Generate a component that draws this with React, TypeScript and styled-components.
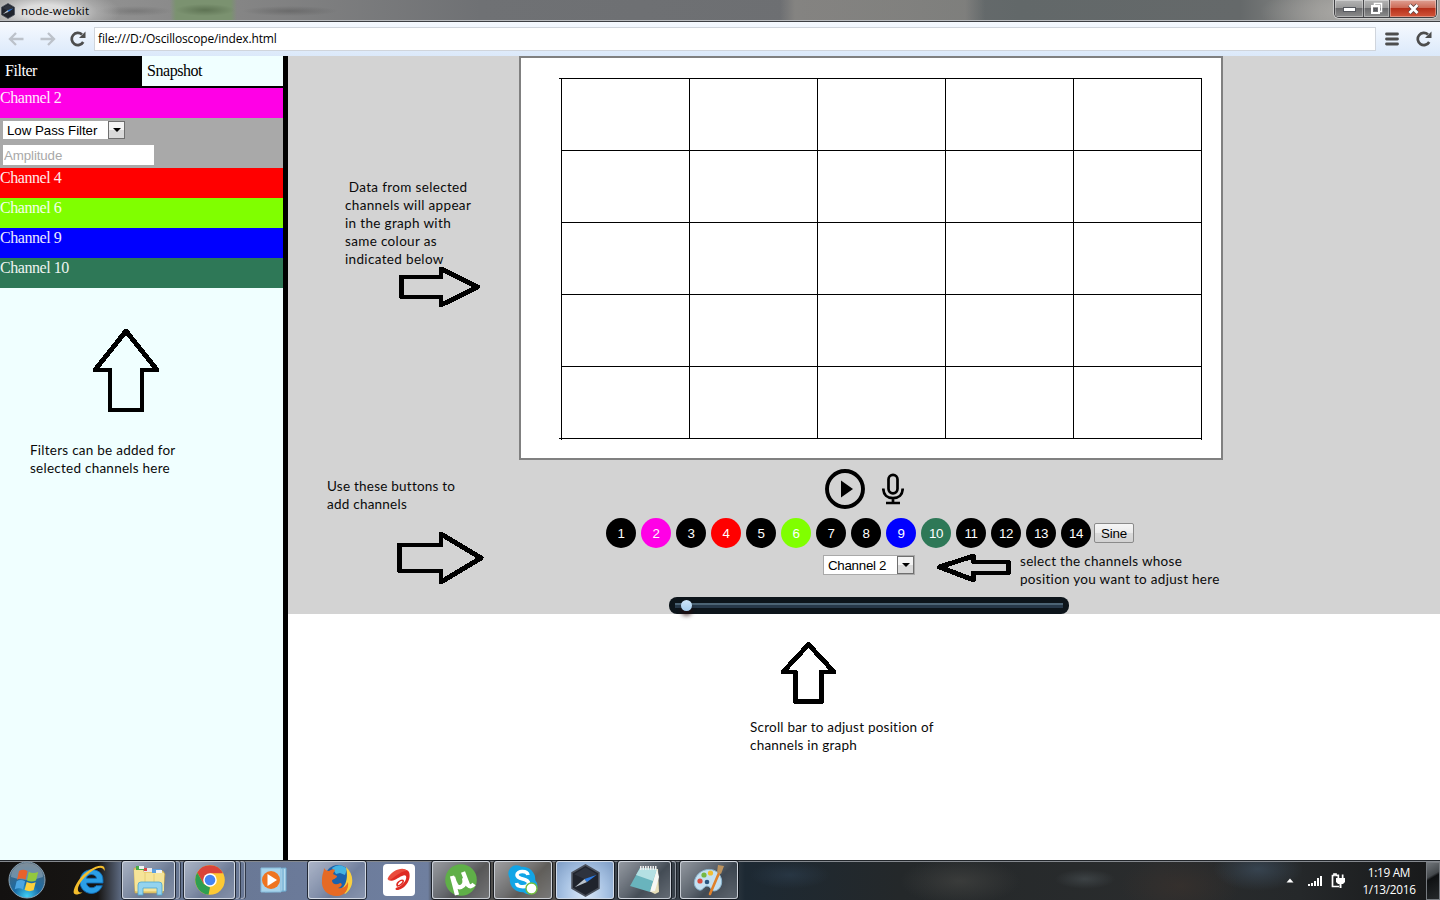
import React from "react";
import styled, { createGlobalStyle, css } from "styled-components";

const GlobalStyle = createGlobalStyle`
  *, *::before, *::after { box-sizing: border-box; }
  html, body { margin: 0; padding: 0; background: #fff; overflow: hidden; }
  svg { display: block; flex: none; }
`;

const ui = `"Open Sans", "Noto Sans", sans-serif`;
const arial = `"Liberation Sans", Arial, sans-serif`;

const Screen = styled.div`
  position: relative;
  width: 1440px;
  height: 900px;
  display: flex;
  flex-direction: column;
  overflow: hidden;
  background: #fff;
`;

/* ---------- window frame ---------- */

const TitleBar = styled.header`
  flex: none;
  height: 22px;
  display: flex;
  align-items: flex-start;
  padding-right: 3px;
  border-bottom: 1px solid #3e4044;
  box-shadow: inset 0 -1px 0 #b9bbbe;
  background:
    radial-gradient(ellipse 75px 24px at 45px 12px, rgba(225, 225, 225, 0.95) 30%, rgba(190, 190, 190, 0.5) 70%, transparent),
    radial-gradient(ellipse 30px 6px at 205px 10px, rgba(75, 95, 65, 0.6), transparent),
    radial-gradient(ellipse 48px 5px at 290px 11px, rgba(85, 85, 85, 0.5), transparent),
    radial-gradient(ellipse 38px 5px at 135px 11px, rgba(95, 95, 95, 0.45), transparent),
    linear-gradient(90deg, transparent 170px, #7b9270 176px, #7b9270 231px, transparent 237px),
    linear-gradient(90deg, transparent 780px, rgba(140, 138, 134, 0.75) 795px, rgba(140, 138, 134, 0.65) 965px, transparent 985px),
    radial-gradient(ellipse 120px 30px at 1380px 12px, #b4b2ae, transparent),
    linear-gradient(90deg, #999 0, #858585 240px, #6f7174 480px, #6d6f72 800px, #626869 1020px, #65696a 1240px, #8d8d8b 1320px, #9a9a98 100%);
`;

const AppIcon = styled.span`
  margin: 3px 0 0 0;
  width: 16px;
`;

const Title = styled.span`
  flex: 1;
  margin-left: 5px;
  font: 11.5px/22px ${ui};
  letter-spacing: 0.14px;
  color: #000;
`;

const WindowButtons = styled.div`
  display: flex;
  height: 18px;
  border: 1px solid #3f3f42;
  border-top: 0;
  border-radius: 0 0 5px 5px;
  overflow: hidden;
  box-shadow: 0 0 0 1px rgba(230, 230, 230, 0.6);
`;

const WindowButton = styled.span<{ $w: number; $close?: boolean }>`
  width: ${(p) => p.$w}px;
  display: flex;
  align-items: center;
  justify-content: center;
  box-shadow: inset 0 0 0 1px rgba(255, 255, 255, 0.35);
  background: ${(p) =>
    p.$close
      ? "linear-gradient(#dfa093 0, #cd6b57 45%, #b6301a 50%, #d2553a 100%)"
      : "linear-gradient(#b4b4b4 0, #9a9a9a 45%, #6b6b6d 50%, #8c8c8c 100%)"};
  & + & { border-left: 1px solid #4a4a4d; }
`;

const Toolbar = styled.nav`
  flex: none;
  height: 34px;
  display: flex;
  align-items: center;
  padding: 0 8px 0 7px;
  background: linear-gradient(#f6faff, #dbe9fa);
`;

const Address = styled.div`
  flex: 1;
  height: 24px;
  margin: 0 9px 0 8px;
  padding-left: 3px;
  border: 1px solid #d0d5dc;
  background: #fff;
  font: 12px/22px ${ui};
  letter-spacing: -0.14px;
  color: #000;
`;

const ToolIcon = styled.span<{ $ml?: number }>`
  display: flex;
  margin-left: ${(p) => p.$ml ?? 0}px;
`;

/* ---------- page ---------- */

const Page = styled.div`
  flex: 1;
  min-height: 0;
  display: flex;
`;

const Sidebar = styled.aside`
  flex: none;
  width: 288px;
  border-right: 5px solid #000;
  background: #f0ffff;
  font: 16px/20px "Liberation Serif", "Times New Roman", serif;
  letter-spacing: -0.45px;
`;

const Tabs = styled.div`
  display: flex;
  height: 32px;
  border-bottom: 2px solid #000;
`;

const Tab = styled.div<{ $active?: boolean }>`
  width: ${(p) => (p.$active ? 142 : 141)}px;
  padding-left: 5px;
  line-height: 30px;
  color: ${(p) => (p.$active ? "#fff" : "#000")};
  background: ${(p) => (p.$active ? "#000" : "#f0ffff")};
`;

const ChannelRow = styled.div<{ $color: string }>`
  height: 30px;
  color: #fff;
  background: ${(p) => p.$color};
`;

const RowLabel = styled.span`
  opacity: 0.92;
`;

const FilterPanel = styled.div`
  height: 50px;
  padding: 3px 0 0 3px;
  background: #a9a9a9;
`;

const SelectBox = styled.div<{ $w: number; $h: number; $border?: boolean }>`
  display: flex;
  justify-content: space-between;
  align-items: center;
  width: ${(p) => p.$w}px;
  height: ${(p) => p.$h}px;
  padding-left: 4px;
  background: #fff;
  color: #000;
  font: 13.333px/18px ${arial};
  letter-spacing: -0.05px;
  ${(p) =>
    p.$border &&
    css`
      border: 1px solid #a9a9a9;
      letter-spacing: -0.28px;
    `}
`;

const SelectText = styled.span`
  padding-top: 1px;
`;

const SelectArrow = styled.span`
  width: 17px;
  height: 18px;
  display: flex;
  align-items: center;
  justify-content: center;
  border: 1px solid #6f6f6f;
  background: linear-gradient(#f4f4f4 50%, #dadada 50%);
`;

const AmplitudeInput = styled.input`
  display: block;
  width: 151px;
  height: 20px;
  margin-top: 6px;
  padding: 1px;
  border: 0;
  background: #fff;
  font: 13.333px ${arial};
  letter-spacing: -0.12px;
  &::placeholder { color: #a9a9a9; opacity: 1; }
`;

const Scope = styled.main`
  flex: 1;
  height: 558px;
  display: flex;
  flex-direction: column;
  align-items: center;
  background: #d3d3d3;
`;

const GraphFrame = styled.div`
  flex: none;
  width: 704px;
  height: 404px;
  margin-left: 14px;
  border: 2px solid #808080;
  background: #fff;
`;

const Transport = styled.div`
  display: flex;
  align-items: center;
  gap: 17px;
  height: 40px;
  margin: 9px 0 0 0;
`;

const ChannelBar = styled.div`
  display: flex;
  align-items: center;
  gap: 5px;
  height: 30px;
  margin: 9px 0 0 12px;
`;

const ChannelButton = styled.button<{ $color: string }>`
  width: 30px;
  height: 30px;
  padding: 1px 0 0 0;
  border: 0;
  border-radius: 50%;
  background: ${(p) => p.$color};
  color: #fff;
  font: 13.333px/29px ${arial};
  letter-spacing: -0.4px;
`;

const SineButton = styled.button`
  width: 40px;
  height: 20px;
  margin-left: -2px;
  padding: 0;
  border: 1px solid #8a8a8a;
  border-radius: 2px;
  background: linear-gradient(#f6f6f6 0, #ebebeb 50%, #dcdcdc 50%, #d2d2d2 100%);
  font: 13.333px/17px ${arial};
  letter-spacing: -0.2px;
  color: #000;
`;

const PositionSelect = styled.div`
  margin: 7px 0 0 10px;
`;

const Slider = styled.div`
  width: 400px;
  height: 17px;
  margin: 22px 0 0 10px;
  padding: 6px 6px 0 6px;
  border-radius: 8px;
  background: #0d151b;
`;

const SliderTrack = styled.div`
  height: 5px;
  display: flex;
  align-items: center;
  padding-left: 6px;
  background: linear-gradient(#4c6475 0 2px, #27394a 2px);
`;

const SliderThumb = styled.span`
  flex: none;
  width: 11px;
  height: 11px;
  border-radius: 50%;
  background: linear-gradient(#cfe6fa, #a5cdee);
  box-shadow: 0 5px 4px rgba(40, 10, 10, 0.6);
`;

/* ---------- annotations drawn over the page ---------- */

const Note = styled.p<{ $x: number; $y: number; $ls?: number }>`
  position: absolute;
  left: ${(p) => p.$x}px;
  top: ${(p) => p.$y}px;
  margin: 0;
  white-space: pre;
  font: 13.5px/18px Lato, "Open Sans", sans-serif;
  letter-spacing: ${(p) => p.$ls ?? 0}px;
  color: #0a0a0a;
`;

const ArrowLayer = styled.svg`
  position: absolute;
  left: 0;
  top: 0;
  pointer-events: none;
`;

/* ---------- taskbar ---------- */

const Taskbar = styled.footer`
  flex: none;
  height: 40px;
  display: flex;
  border-top: 1px solid #22262b;
  box-shadow: inset 0 1px 0 #85898f;
  background:
    radial-gradient(ellipse 45px 22px at 1258px 8px, rgba(75, 100, 125, 0.45), transparent),
    radial-gradient(ellipse 60px 30px at 1180px 25px, rgba(60, 50, 45, 0.6), transparent),
    radial-gradient(ellipse 30px 10px at 1085px 18px, rgba(90, 100, 105, 0.4), transparent),
    radial-gradient(ellipse 60px 24px at 960px 20px, rgba(75, 75, 72, 0.55), transparent),
    radial-gradient(ellipse 40px 14px at 790px 14px, rgba(50, 70, 90, 0.45), transparent),
    linear-gradient(90deg, #131110 0, #171513 98px, #66758f 124px, #6b7a99 300px, #6f7f9f 428px, #45474a 434px, #5a564f 540px, #3c444c 620px, #343d46 730px, #1d2933 745px, #24282a 900px, #2a2c2d 1160px, #25282a 1300px, #171819 100%);
`;

const TaskItem = styled.div<{ $w: number; $ml?: number; $kind?: "framed" | "active" }>`
  flex: none;
  display: flex;
  align-items: center;
  justify-content: center;
  width: ${(p) => p.$w}px;
  height: 38px;
  margin-left: ${(p) => p.$ml ?? 0}px;
  ${(p) =>
    p.$kind &&
    css`
      border: 1px solid rgba(225, 230, 238, 0.8);
      border-radius: 3px;
      box-shadow: 0 0 0 1px rgba(10, 14, 20, 0.75);
      background: ${p.$kind === "active"
        ? "radial-gradient(ellipse at 50% 90%, #dceafa, #a6c1e2 55%, #7d9cc4)"
        : "linear-gradient(135deg, rgba(235,238,245,0.5) 0, rgba(200,206,220,0.25) 45%, rgba(150,156,170,0.12) 60%, rgba(200,205,215,0.3) 100%)"};
    `}
`;

const Stack = styled.div`
  flex: none;
  width: 4px;
  height: 38px;
  margin-left: 1px;
  border: 1px solid rgba(200, 206, 216, 0.6);
  border-left: 0;
  border-radius: 0 3px 3px 0;
  box-shadow: 1px 0 0 rgba(10, 14, 20, 0.6);
`;

const Tray = styled.div`
  margin-left: auto;
  display: flex;
  align-items: center;
`;

const Clock = styled.div`
  width: 74px;
  margin-left: 7px;
  text-align: center;
  color: #fff;
  font: 11.8px/17px ${ui};
  letter-spacing: -0.3px;
`;

const ShowDesktop = styled.div`
  width: 14px;
  height: 38px;
  border: 1px solid #777b80;
  background: linear-gradient(150deg, #70757a 0, #44484c 35%, #0e1012 42%, #26292b 100%);
`;

/* ---------- drawings ---------- */

const HexCompass = ({ size }: { size: number }) => (
  <svg width={size} height={size} viewBox="0 0 32 32">
    <path d="M16 1 29 8.500V23.500L16 31 3 23.500V8.500Z" fill="#20242d" stroke="#4b515c" strokeWidth="1.6" />
    <path d="M16 3.500 27 10 16 15 5 10Z" fill="#343a46" opacity=".7" />
    <path d="M5.500 22.500 15 14.500 17.500 17.500Z" fill="#b9c2cc" />
    <path d="M27 10.500 15 14.500 17.500 17.500Z" fill="#2f7be0" />
  </svg>
);

const NavArrow = ({ flip }: { flip?: boolean }) => (
  <svg width="18" height="16" viewBox="0 0 18 16" style={flip ? { transform: "scaleX(-1)" } : undefined}>
    <path d="M16.500 8H3.500M9 2 3 8l6 6" fill="none" stroke="#bcc2ca" strokeWidth="2.300" />
  </svg>
);

const Reload = () => (
  <svg width="16" height="16" viewBox="0 0 16 16">
    <path d="M13.200 11A6.100 6.100 0 1 1 12 3.500" fill="none" stroke="#4d4d4d" strokeWidth="2.700" />
    <path d="M15.500 0.500V7H9Z" fill="#4d4d4d" />
  </svg>
);

const DropTriangle = () => (
  <svg width="8" height="4" viewBox="0 0 8 4">
    <path d="M0 0h8L4 4Z" fill="#000" />
  </svg>
);

const Graph = () => (
  <svg width="700" height="400" viewBox="0 0 700 400" shapeRendering="crispEdges">
    {[0, 1, 2, 3, 4, 5].map((i) => (
      <g key={i} fill="#000">
        <rect x={40 + i * 128} y={20} width={1} height={i % 5 === 0 ? 362 : 361} />
        <rect x={i % 5 === 0 ? 38 : 40} y={20 + i * 72} width={i % 5 === 0 ? 643 : 641} height={1} />
      </g>
    ))}
  </svg>
);

const PlayIcon = () => (
  <svg width="40" height="40" viewBox="0 0 40 40">
    <circle cx="20" cy="20" r="18" fill="none" stroke="#000" strokeWidth="3.900" />
    <path d="M16 11.500 28 20 16 28.500Z" fill="#000" />
  </svg>
);

const MicIcon = () => (
  <svg width="22" height="32" viewBox="0 0 22 32">
    <g fill="none" stroke="#000" strokeWidth="2.700">
      <rect x="6.500" y="1.800" width="9" height="18.500" rx="4.500" />
      <path d="M1.300 15.500c0 6.500 4.200 9.600 9.700 9.600s9.700-3.100 9.700-9.600M11 25v5M4 30h14" />
    </g>
  </svg>
);

const StartOrb = () => (
  <svg width="38" height="38" viewBox="0 0 38 38">
    <defs>
      <radialGradient id="orb" cx=".5" cy=".95" r=".9">
        <stop offset="0" stopColor="#3fd0f5" />
        <stop offset=".4" stopColor="#1a6ca6" />
        <stop offset="1" stopColor="#4d6375" />
      </radialGradient>
    </defs>
    <circle cx="19" cy="19" r="18" fill="url(#orb)" stroke="#8ba3b5" />
    <path d="M3 16a16 14 0 0 1 32 0q-16 6-32 0Z" fill="#fff" opacity=".27" />
    <path d="M11 10q4-2.500 8.500 0l-2 8.700q-4-2.300-8.500 0Z" fill="#e8622c" />
    <path d="M20.800 10.800q4 2.300 9.400.2l-2.200 8.600q-4.500 2-9-.2Z" fill="#93c83e" />
    <path d="M8.600 20.300q4-2.400 8.500 0l-2.100 8.300q-3.500-2.300-8.300-.3Z" fill="#4ba5e2" />
    <path d="M18.700 21q4 2.200 9 .2l-2.100 8.100q-4.500 1.800-9-.3Z" fill="#fcd03c" />
  </svg>
);

const ExplorerE = () => (
  <svg width="34" height="34" viewBox="0 0 34 34">
    <path d="M30 20H13.500c.3 5 7 6.300 9.500 2.700h6.300C24.500 35 6.500 32 7 18 7.500 3 30 3 30 17ZM13.500 15.300h10c-.5-5-9.500-5-10 0Z" fill="#2b9fe6" stroke="#116bb4" strokeWidth=".9" />
    <path d="M31.500 8C34-3 14 5 5.500 17.500-2 29-1 35 9.500 29.500 1 30.500 5.500 20 13 13 20 6 29 1 31.500 8Z" fill="#f4bd2c" />
  </svg>
);

const FolderIcon = () => (
  <svg width="34" height="32" viewBox="0 0 34 32">
    <path d="M2 4h8l1 3h20l2 3-2 19H3Z" fill="#e9cf74" stroke="#c3a24c" strokeWidth=".7" />
    <path d="M4 2h8v4H4Z" fill="#48ad49" /><path d="M12 4h8v4h-8Z" fill="#e9e9e9" /><path d="M20 5h9v4h-9Z" fill="#5c9fe0" />
    <path d="M7 2h5v3H7Z" fill="#f3f3f3" /><path d="M12 4h3v3h-3Z" fill="#d44" /><path d="M24 6h6v3h-6Z" fill="#f3f3f3" />
    <path d="M2 6h9l1 3h20v18H3Z" fill="#f6e498" />
    <path d="M13 9v15M22 10v14" stroke="#e2c76d" strokeWidth=".8" />
    <path d="M6 31V21q0-3 3-3h18q3 0 3 3v10h-5v-7H11v7Z" fill="#93d3ee" stroke="#4ba4cf" strokeWidth=".8" />
  </svg>
);

const ChromeIcon = () => (
  <svg width="30" height="30" viewBox="0 0 30 30">
    <circle cx="15" cy="15" r="14.800" fill="#fcc934" />
    <path d="M2.200 7.600A14.800 14.800 0 0 1 28 8.200H15L8.600 18.700Z" fill="#d9443a" />
    <path d="M2.200 7.600 8.600 18.700 15 22.400 13.500 29.700A14.800 14.800 0 0 1 2.200 7.600Z" fill="#2f9e50" />
    <circle cx="15" cy="15" r="6.800" fill="#fff" />
    <circle cx="15" cy="15" r="5.300" fill="#4585f2" />
  </svg>
);

const MediaIcon = () => (
  <svg width="28" height="26" viewBox="0 0 28 26">
    <path d="M5 2 26 1v23L5 25Z" fill="#b9dcef" stroke="#6aaad0" />
    <path d="M23 2v22" stroke="#5a9fc9" />
    <path d="M1 1h20v24H1Z" fill="#a9d4eb" stroke="#86bcdc" />
    <circle cx="11" cy="13" r="9" fill="#ef7420" />
    <path d="M7.500 7 17 13 7.500 19Z" fill="#fff" />
  </svg>
);

const FirefoxIcon = () => (
  <svg width="32" height="32" viewBox="0 0 32 32">
    <circle cx="17" cy="14" r="13" fill="#1b62ad" />
    <path d="M11 4q8-6 15 1l-2 6-5-2-4 1Z" fill="#44b3e2" />
    <path d="M25 3c9 8 8 21-1 27l-4-5c6-4 7-13 5-22Z" fill="#f8cf40" />
    <path d="M3 4c1 2 3 3 5 3 3-2 5-2 6-1l-2 4 4 2c0 3-5 3-5 5 1 4 5 4 8 2 3 0 2 4-2 5 4 1 8-1 10-6 1 7-3 14-11 14C6 32 0 25 1 16 1 10 3 8 3 4Z" fill="#e66a24" />
  </svg>
);

const AirtelIcon = () => (
  <svg width="32" height="32" viewBox="0 0 32 32">
    <rect width="32" height="32" rx="4" fill="#fff" />
    <path d="M6 15C8 8 22 2 26 8c3 8-5 18-12 18-2 0-2-2 0-2.500 5-1 10.500-8 9-11.500-2-3-8 3-13 4.500-3 .5-4.500 0-4-1.500Z" fill="#df2b23" />
    <path d="M14.500 22c-2-3 3.500-6.500 5.500-5.500 1 1.500-2.500 5.500-5.500 5.500Z" fill="none" stroke="#df2b23" strokeWidth="1.600" />
    <path d="M4.500 15C8 6 21 2 24 7c-5-1-12 6-18 9.500Z" fill="#ea4b3c" />
  </svg>
);

const TorrentIcon = () => (
  <svg width="32" height="32" viewBox="0 0 32 32">
    <circle cx="16" cy="16" r="15.800" fill="#5faf48" />
    <path d="M7 12 12 31M8 13q3 12 8 10t3-9M18 8l5 13q3 3 6-1" fill="none" stroke="#fff" strokeWidth="4.300" />
  </svg>
);

const SkypeIcon = () => (
  <svg width="30" height="30" viewBox="0 0 30 30">
    <circle cx="14.500" cy="14.500" r="12.800" fill="#12a5e6" />
    <circle cx="8.500" cy="8.500" r="8.200" fill="#12a5e6" /><circle cx="21" cy="21" r="8.500" fill="#12a5e6" />
    <path d="M20 10c-1-5-11-4.500-11 0 0 5 11.500 3 11.500 8 0 5-11 5-12 0" fill="none" stroke="#fff" strokeWidth="3.600" />
    <circle cx="23.500" cy="23.500" r="5.500" fill="#fff" stroke="#72bd3d" strokeWidth="1.400" />
  </svg>
);

const NotepadIcon = () => (
  <svg width="32" height="30" viewBox="0 0 32 30">
    <path d="M12 3 29 4 30 27 26 29 22 27Z" fill="#e8dfb8" />
    <path d="M11 3 28 4 21 27 1 21Z" fill="#69b4bd" />
    <path d="M11 3 28 4 24 16 7 10Z" fill="#b4e0e3" />
    <path d="M28 4 21 27 26 26 30 12Z" fill="#f5f7f4" />
    <path d="M11 3h17" stroke="#eee" strokeWidth="4" strokeDasharray="1.500 1" />
  </svg>
);

const PaintIcon = () => (
  <svg width="32" height="32" viewBox="0 0 32 32">
    <path d="M3 13C8 4 21 3 26 10c6 8 1 17-5 17-4 0-3-5-7-5-3 0-4 5-8 4-5-2-6-8-3-13Z" fill="#c5e1f2" stroke="#8ab3cc" />
    <circle cx="7" cy="17" r="2.600" fill="#d94d3f" /><circle cx="11" cy="11" r="2.600" fill="#76b843" />
    <circle cx="17.500" cy="9" r="2.600" fill="#f0bd33" /><circle cx="14" cy="18" r="2.300" fill="#2a5580" />
    <path d="M26 9 17 30" stroke="#df812c" strokeWidth="2.600" strokeLinecap="round" />
    <path d="M24 8 25 1l6 1-3 8Z" fill="#bc935f" />
  </svg>
);

const SignalIcon = () => (
  <svg width="15" height="12" viewBox="0 0 15 12" fill="#fff" shapeRendering="crispEdges">
    <path d="M0 9h2v2H0ZM3 8h2v3H3ZM6 6h2v5H6ZM9 3h2v8H9ZM12 1h2v10h-2Z" />
  </svg>
);

const PowerIcon = () => (
  <svg width="14" height="16" viewBox="0 0 14 16">
    <path d="M7 2.500H5V1H3v1.500H1.500v11H8" fill="none" stroke="#fff" strokeWidth="1.700" />
    <path d="M5 5h9v4l-2 2h-1.500v4h-2v-4H7L5 9ZM6.500 1.500h1.700V5H6.500ZM10.800 1.500h1.700V5h-1.700Z" fill="#fff" />
  </svg>
);

const arrows = [
  "M401.500 277H441V269L477.500 287 441 305V297H401.500Z",
  "M126 331 157 370H142V410H110V370H95Z",
  "M399.500 545H441V534L481 558 441 582V571H399.500Z",
  "M939.500 567 973.500 556V562H1008.500V573H973.500V580Z",
  "M808.500 644.500 834 672H821.500V701.500H795.500V672H783Z",
];

const channelColors: Record<number, string> = {
  2: "#ff00e6",
  4: "#ff0000",
  6: "#80ff00",
  9: "#0000ff",
  10: "#2e7857",
};

const notes = [
  { x: 345, y: 178, ls: 0.34, text: " Data from selected\nchannels will appear\nin the graph with\nsame colour as\nindicated below" },
  { x: 30, y: 441, ls: 0.25, text: "Filters can be added for\nselected channels here" },
  { x: 327, y: 477, ls: 0.23, text: "Use these buttons to\nadd channels" },
  { x: 1020, y: 552, ls: 0.29, text: "select the channels whose\nposition you want to adjust here" },
  { x: 750, y: 718, ls: 0.22, text: "Scroll bar to adjust position of\nchannels in graph" },
];

export default function App() {
  return (
    <Screen>
      <GlobalStyle />
      <TitleBar>
        <AppIcon><HexCompass size={16} /></AppIcon>
        <Title>node-webkit</Title>
        <WindowButtons>
          <WindowButton $w={28}>
            <svg width="13" height="6" viewBox="0 0 13 6"><rect x=".5" y="1.500" width="12" height="4" fill="#fff" stroke="#55585e" /></svg>
          </WindowButton>
          <WindowButton $w={26}>
            <svg width="13" height="13" viewBox="0 0 13 13" fill="none">
              <path d="M4.500 3V1.500h7v8H10" stroke="#fff" strokeWidth="1.500" />
              <rect x="2" y="4" width="7" height="7" stroke="#fff" strokeWidth="2" />
              <rect x="4.500" y="6.500" width="2" height="2" stroke="#55585e" />
            </svg>
          </WindowButton>
          <WindowButton $w={47} $close>
            <svg width="13" height="12" viewBox="0 0 13 12" fill="none">
              <path d="M2.500 2 10.500 10M10.500 2 2.500 10" stroke="#59403f" strokeWidth="4.200" />
              <path d="M2.500 2 10.500 10M10.500 2 2.500 10" stroke="#fff" strokeWidth="2.800" />
            </svg>
          </WindowButton>
        </WindowButtons>
      </TitleBar>

      <Toolbar>
        <ToolIcon><NavArrow /></ToolIcon>
        <ToolIcon $ml={14}><NavArrow flip /></ToolIcon>
        <ToolIcon $ml={13}><Reload /></ToolIcon>
        <Address>file:///D:/Oscilloscope/index.html</Address>
        <ToolIcon>
          <svg width="14" height="14" viewBox="0 0 14 14">
            <path d="M1.500 2h11M1.500 7h11M1.500 12h11" stroke="#4d4d4d" strokeWidth="2.800" strokeLinecap="round" />
          </svg>
        </ToolIcon>
        <ToolIcon $ml={17}><Reload /></ToolIcon>
      </Toolbar>

      <Page>
        <Sidebar>
          <Tabs>
            <Tab $active>Filter</Tab>
            <Tab>Snapshot</Tab>
          </Tabs>
          <ChannelRow $color={channelColors[2]}><RowLabel>Channel 2</RowLabel></ChannelRow>
          <FilterPanel>
            <SelectBox $w={122} $h={18}>
              <SelectText>Low Pass Filter</SelectText>
              <SelectArrow><DropTriangle /></SelectArrow>
            </SelectBox>
            <AmplitudeInput placeholder="Amplitude" />
          </FilterPanel>
          {[4, 6, 9, 10].map((n) => (
            <ChannelRow key={n} $color={channelColors[n]}><RowLabel>Channel {n}</RowLabel></ChannelRow>
          ))}
        </Sidebar>

        <Scope>
          <GraphFrame><Graph /></GraphFrame>
          <Transport>
            <PlayIcon />
            <MicIcon />
          </Transport>
          <ChannelBar>
            {Array.from({ length: 14 }, (_, i) => i + 1).map((n) => (
              <ChannelButton key={n} $color={channelColors[n] ?? "#000"}>{n}</ChannelButton>
            ))}
            <SineButton>Sine</SineButton>
          </ChannelBar>
          <PositionSelect>
            <SelectBox $w={92} $h={20} $border>
              <SelectText>Channel 2</SelectText>
              <SelectArrow><DropTriangle /></SelectArrow>
            </SelectBox>
          </PositionSelect>
          <Slider>
            <SliderTrack><SliderThumb /></SliderTrack>
          </Slider>
        </Scope>
      </Page>

      <Taskbar>
        <TaskItem $w={38} $ml={8}><StartOrb /></TaskItem>
        <TaskItem $w={36} $ml={26}><ExplorerE /></TaskItem>
        <TaskItem $w={53} $ml={14} $kind="framed"><FolderIcon /></TaskItem>
        <Stack />
        <TaskItem $w={51} $ml={4} $kind="framed"><ChromeIcon /></TaskItem>
        <Stack /><Stack />
        <TaskItem $w={60} $ml={-1}><MediaIcon /></TaskItem>
        <TaskItem $w={58} $ml={4} $kind="framed"><FirefoxIcon /></TaskItem>
        <TaskItem $w={62} $ml={2}><AirtelIcon /></TaskItem>
        <TaskItem $w={58} $ml={2} $kind="framed"><TorrentIcon /></TaskItem>
        <TaskItem $w={58} $ml={4} $kind="framed"><SkypeIcon /></TaskItem>
        <TaskItem $w={58} $ml={4} $kind="active"><HexCompass size={33} /></TaskItem>
        <TaskItem $w={53} $ml={4} $kind="framed"><NotepadIcon /></TaskItem>
        <Stack />
        <TaskItem $w={58} $ml={4} $kind="framed"><PaintIcon /></TaskItem>
        <Tray>
          <svg width="8" height="5" viewBox="0 0 8 5"><path d="M4 0.500 7.500 4.500H0.500Z" fill="#fff" /></svg>
          <ToolIcon $ml={14}><SignalIcon /></ToolIcon>
          <ToolIcon $ml={8}><PowerIcon /></ToolIcon>
          <Clock>1:19 AM<br />1/13/2016</Clock>
          <ShowDesktop />
        </Tray>
      </Taskbar>

      <ArrowLayer width="1440" height="900" viewBox="0 0 1440 900" shapeRendering="crispEdges">
        {arrows.map((d) => (
          <path key={d} d={d} fill="none" stroke="#000" strokeWidth="4.900" strokeLinejoin="round" />
        ))}
      </ArrowLayer>
      {notes.map((n) => (
        <Note key={n.text} $x={n.x} $y={n.y} $ls={n.ls}>{n.text}</Note>
      ))}
    </Screen>
  );
}
